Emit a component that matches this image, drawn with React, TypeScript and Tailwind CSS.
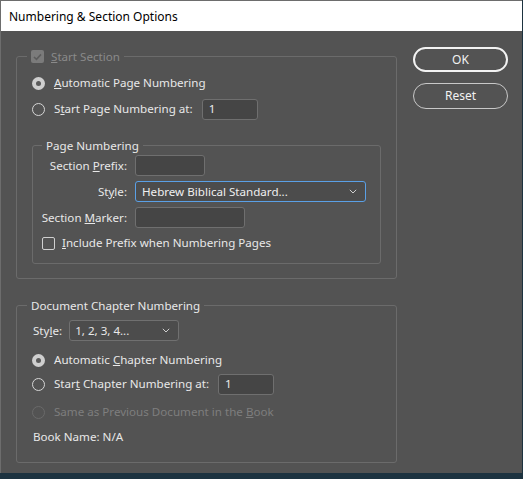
import React from 'react';

const font = { fontFamily: '"Noto Sans", "Open Sans", sans-serif' };

const Radio: React.FC<{ checked?: boolean; disabled?: boolean }> = ({ checked, disabled }) => {
  if (checked) {
    return (
      <span className="w-[13px] h-[13px] rounded-full bg-[#cfcfcf] flex items-center justify-center shrink-0">
        <span className="w-[5px] h-[5px] rounded-full bg-[#5a5a5a]" />
      </span>
    );
  }
  return (
    <span
      className={`w-[13px] h-[13px] rounded-full border shrink-0 ${
        disabled ? 'border-[#6a6a6a]' : 'border-[#d6d6d6]'
      }`}
    />
  );
};

const Chevron: React.FC = () => (
  <svg width="8" height="5" viewBox="0 0 8 5" className="shrink-0">
    <path d="M0.8 0.8 L4 4 L7.2 0.8" fill="none" stroke="#cfcfcf" strokeWidth="1" />
  </svg>
);

const TextBox: React.FC<{ w: string; value?: string }> = ({ w, value }) => (
  <div
    className={`${w} h-[21px] bg-[#454545] border border-[#6f6f6f] rounded-[3px] flex items-center px-[6px] text-[#ececec]`}
  >
    {value}
  </div>
);

const Label: React.FC<{ children: React.ReactNode }> = ({ children }) => (
  <span className="w-[86px] shrink-0 flex justify-end pr-[1px]">
    <span className="whitespace-nowrap">{children}</span>
  </span>
);

export default function App() {
  return (
    <div className="w-[523px] h-[479px] bg-[#1d3340] overflow-hidden text-[11.6px] leading-none" style={font}>
      <div className="w-[522px] h-[473px] bg-[#535353] border-l border-t border-[#6d6d6d] flex flex-col">
        {/* title bar */}
        <div className="h-[30px] bg-white flex items-center pl-[8px] pt-[1px] text-[12px] text-black shrink-0">
          Numbering &amp; Section Options
        </div>

        <div className="flex pl-[15px] text-[#e8e8e8]">
          {/* left column */}
          <div className="w-[381px] flex flex-col">
            <fieldset className="mt-[19px] h-[229px] min-w-0 border border-[#6b6b6b] rounded-[3px]">
              <legend className="ml-[10px] px-[4px] flex items-center gap-[7px] h-[13px] text-[#8a8a8a]">
                <span className="w-[13px] h-[13px] rounded-[2px] bg-[#7b7b7b] flex items-center justify-center">
                  <svg width="9" height="8" viewBox="0 0 9 8">
                    <path d="M1 4 L3.5 6.4 L8 1.4" fill="none" stroke="#5c5c5c" strokeWidth="1.6" />
                  </svg>
                </span>
                <span>
                  <u>S</u>tart Section
                </span>
              </legend>

              <div className="px-[15px]">
                <div className="h-[20px] mt-[10px] flex items-center gap-[9px]">
                  <Radio checked />
                  <span>
                    <u>A</u>utomatic Page Numbering
                  </span>
                </div>
                <div className="h-[22px] mt-[5px] flex items-center gap-[9px]">
                  <Radio />
                  <span>
                    S<u>t</u>art Page Numbering at:
                  </span>
                  <TextBox w="w-[56px]" value="1" />
                </div>

                <fieldset className="mt-[18px] h-[126px] min-w-0 border border-[#6b6b6b] rounded-[3px]">
                  <legend className="ml-[9px] px-[4px] h-[15px] flex items-center">Page Numbering</legend>
                  <div className="pl-[9px] pr-[14px]">
                    <div className="flex items-center mt-[2px] h-[21px]">
                      <Label>
                        Section <u>P</u>refix:
                      </Label>
                      <span className="ml-[7px]">
                        <TextBox w="w-[70px]" />
                      </span>
                    </div>
                    <div className="flex items-center mt-[5px] h-[21px]">
                      <Label>
                        St<u>y</u>le:
                      </Label>
                      <div className="ml-[7px] w-[232px] h-[21px] bg-[#4c4c4c] border border-[#5aa0e6] rounded-[3px] flex items-center justify-between pl-[6px] pr-[8px] text-[#f0f0f0]">
                        <span>Hebrew Biblical Standard...</span>
                        <Chevron />
                      </div>
                    </div>
                    <div className="flex items-center mt-[5px] h-[21px]">
                      <Label>
                        Section <u>M</u>arker:
                      </Label>
                      <span className="ml-[7px]">
                        <TextBox w="w-[110px]" />
                      </span>
                    </div>
                    <div className="flex items-center mt-[8px] h-[14px] gap-[7px]">
                      <span className="w-[13px] h-[13px] rounded-[2px] border border-[#d0d0d0]" />
                      <span>
                        <u>I</u>nclude Prefix when Numbering Pages
                      </span>
                    </div>
                  </div>
                </fieldset>
              </div>
            </fieldset>

            <fieldset className="mt-[19px] h-[165px] min-w-0 border border-[#6b6b6b] rounded-[3px]">
              <legend className="ml-[10px] px-[4px] h-[15px] flex items-center">Document Chapter Numbering</legend>
              <div className="px-[15px]">
                <div className="flex items-center h-[21px] mt-[7px]">
                  <span className="pl-[1px]">
                    Sty<u>l</u>e:
                  </span>
                  <div className="ml-[7px] w-[110px] h-[21px] bg-[#4c4c4c] border border-[#707070] rounded-[3px] flex items-center justify-between pl-[5px] pr-[8px]">
                    <span>1, 2, 3, 4...</span>
                    <Chevron />
                  </div>
                </div>
                <div className="h-[20px] mt-[9px] flex items-center gap-[9px]">
                  <Radio checked />
                  <span>
                    Automatic <u>C</u>hapter Numbering
                  </span>
                </div>
                <div className="h-[22px] mt-[3px] flex items-center gap-[9px]">
                  <Radio />
                  <span>
                    Star<u>t</u> Chapter Numbering at:
                  </span>
                  <TextBox w="w-[56px]" value="1" />
                </div>
                <div className="h-[20px] mt-[7px] flex items-center gap-[9px] text-[#7e7e7e]">
                  <Radio disabled />
                  <span>
                    Same as Previous Document in the <u>B</u>ook
                  </span>
                </div>
                <div className="h-[20px] mt-[5px] flex items-center pl-[1px]">Book Name: N/A</div>
              </div>
            </fieldset>
          </div>

          {/* buttons */}
          <div className="ml-[16px] mt-[16px] flex flex-col gap-[11px]">
            <button className="w-[95px] h-[25px] rounded-full border-2 border-[#f2f2f2] text-[#f2f2f2] text-[12px] flex items-center justify-center">
              OK
            </button>
            <button className="w-[95px] h-[26px] rounded-full border border-[#c8c8c8] text-[#f2f2f2] text-[12px] flex items-center justify-center">
              Reset
            </button>
          </div>
        </div>
      </div>
    </div>
  );
}
